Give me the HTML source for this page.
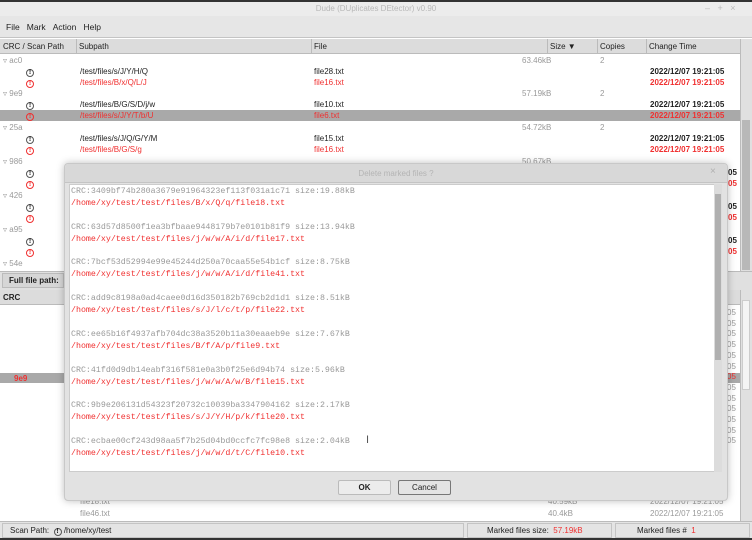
<!DOCTYPE html>
<html><head><meta charset="utf-8"><style>
*{margin:0;padding:0;box-sizing:border-box}
body{width:752px;height:540px;overflow:hidden;background:#fff;font-family:"Liberation Sans","DejaVu Sans",sans-serif;font-size:8px;color:#222;position:relative}
.a{position:absolute;white-space:nowrap}
.r{color:#f03030}
.g{color:#999}
.m{font-family:"Liberation Mono","DejaVu Sans Mono",monospace;font-size:8.3px}
.hd{background:#dcdcdc;border-bottom:1px solid #bbb}
.sep{position:absolute;top:0;width:1px;height:15px;background:#bbb}
.ic{display:inline-block;width:8px;height:8px;border:1px solid #555;border-radius:50%;font-size:7px;line-height:6px;text-align:center;font-weight:bold}
.ic.r{border-color:#f03030}
</style></head><body>
<div class="a" style="left:0;top:0;width:752px;height:2px;background:#333"></div>
<div class="a" style="left:0;top:2px;width:752px;height:14px;background:#ececec;color:#b8b8b8;text-align:center;line-height:14px;font-size:8px">Dude (DUplicates DEtector) v0.90</div>
<div class="a" style="left:705px;top:3px;color:#bbb;font-size:9px">–&nbsp;&nbsp;&nbsp;+&nbsp;&nbsp;&nbsp;×</div>
<div class="a" style="left:0;top:16px;width:752px;height:22px;background:#e6e6e6;border-bottom:1px solid #c4c4c4"></div>
<div class="a" style="left:6px;top:22px;font-size:8.5px">File&nbsp;&nbsp;&nbsp;Mark&nbsp;&nbsp;&nbsp;Action&nbsp;&nbsp;&nbsp;Help</div>
<div class="a hd" style="left:0;top:39px;width:740px;height:15px">
<div class="sep" style="left:76px"></div><div class="sep" style="left:311px"></div><div class="sep" style="left:547px"></div><div class="sep" style="left:597px"></div><div class="sep" style="left:646px"></div>
<span class="a" style="left:3px;top:3px">CRC / Scan Path</span><span class="a" style="left:79px;top:3px">Subpath</span><span class="a" style="left:314px;top:3px">File</span><span class="a" style="left:550px;top:3px">Size ▼</span><span class="a" style="left:600px;top:3px">Copies</span><span class="a" style="left:649px;top:3px">Change Time</span></div>
<div class="a" style="left:740px;top:39px;width:12px;height:232px;background:#e0e0e0;border-left:1px solid #bbb"></div>
<div class="a" style="left:742px;top:120px;width:8px;height:150px;background:#b8b8b8"></div>
<div class="a" style="left:0;top:110px;width:740px;height:11px;background:#a9a9a9"></div>
<div class="a g" style="left:3px;top:56px">▿ ac0</div><div class="a g" style="left:522px;top:56px">63.46kB</div><div class="a g" style="left:600px;top:56px">2</div>
<div class="a" style="left:26px;top:67px"><span class="ic">!</span></div><div class="a" style="left:80px;top:67px">/test/files/s/J/Y/H/Q</div><div class="a" style="left:314px;top:67px">file28.txt</div><div class="a" style="left:650px;top:67px;font-weight:bold">2022/12/07 19:21:05</div>
<div class="a r" style="left:26px;top:78px"><span class="ic r">!</span></div><div class="a r" style="left:80px;top:78px">/test/files/B/x/Q/L/J</div><div class="a r" style="left:314px;top:78px">file16.txt</div><div class="a r" style="left:650px;top:78px;font-weight:bold">2022/12/07 19:21:05</div>
<div class="a g" style="left:3px;top:89px">▿ 9e9</div><div class="a g" style="left:522px;top:89px">57.19kB</div><div class="a g" style="left:600px;top:89px">2</div>
<div class="a" style="left:26px;top:100px"><span class="ic">!</span></div><div class="a" style="left:80px;top:100px">/test/files/B/G/S/D/j/w</div><div class="a" style="left:314px;top:100px">file10.txt</div><div class="a" style="left:650px;top:100px;font-weight:bold">2022/12/07 19:21:05</div>
<div class="a r" style="left:26px;top:111px"><span class="ic r">!</span></div><div class="a r" style="left:80px;top:111px">/test/files/s/J/Y/T/b/U</div><div class="a r" style="left:314px;top:111px">file6.txt</div><div class="a r" style="left:650px;top:111px;font-weight:bold">2022/12/07 19:21:05</div>
<div class="a g" style="left:3px;top:123px">▿ 25a</div><div class="a g" style="left:522px;top:123px">54.72kB</div><div class="a g" style="left:600px;top:123px">2</div>
<div class="a" style="left:26px;top:134px"><span class="ic">!</span></div><div class="a" style="left:80px;top:134px">/test/files/s/J/Q/G/Y/M</div><div class="a" style="left:314px;top:134px">file15.txt</div><div class="a" style="left:650px;top:134px;font-weight:bold">2022/12/07 19:21:05</div>
<div class="a r" style="left:26px;top:145px"><span class="ic r">!</span></div><div class="a r" style="left:80px;top:145px">/test/files/B/G/S/g</div><div class="a r" style="left:314px;top:145px">file16.txt</div><div class="a r" style="left:650px;top:145px;font-weight:bold">2022/12/07 19:21:05</div>
<div class="a g" style="left:3px;top:157px">▿ 986</div><div class="a g" style="left:522px;top:157px">50.67kB</div>
<div class="a" style="left:26px;top:168px"><span class="ic">!</span></div><div class="a r" style="left:26px;top:179px"><span class="ic r">!</span></div>
<div class="a g" style="left:3px;top:191px">▿ 426</div>
<div class="a" style="left:26px;top:202px"><span class="ic">!</span></div><div class="a r" style="left:26px;top:213px"><span class="ic r">!</span></div>
<div class="a g" style="left:3px;top:225px">▿ a95</div>
<div class="a" style="left:26px;top:236px"><span class="ic">!</span></div><div class="a r" style="left:26px;top:247px"><span class="ic r">!</span></div>
<div class="a g" style="left:3px;top:259px">▿ 54e</div>
<div class="a" style="left:728px;top:168px;font-weight:bold">05</div><div class="a r" style="left:728px;top:179px;font-weight:bold">05</div>
<div class="a" style="left:728px;top:202px;font-weight:bold">05</div><div class="a r" style="left:728px;top:213px;font-weight:bold">05</div>
<div class="a" style="left:728px;top:236px;font-weight:bold">05</div><div class="a r" style="left:728px;top:247px;font-weight:bold">05</div>
<div class="a" style="left:0;top:271px;width:752px;height:19px;background:#e0e0e0;border-top:1px solid #bbb"></div>
<div class="a" style="left:2px;top:273px;width:62px;height:15px;background:#d6d6d6;border:1px solid #bbb;font-weight:bold;line-height:13px;padding-left:6px">Full file path:</div>
<div class="a hd" style="left:0;top:290px;width:740px;height:15px"><span class="a" style="left:3px;top:3px;font-weight:bold">CRC</span></div>
<div class="a" style="left:740px;top:290px;width:12px;height:232px;background:#e0e0e0;border-left:1px solid #bbb"></div>
<div class="a" style="left:742px;top:300px;width:8px;height:90px;background:#f4f4f4;border:1px solid #ccc"></div>
<div class="a" style="left:0;top:373px;width:740px;height:10px;background:#a9a9a9"></div>
<div class="a r" style="left:14px;top:374px;font-weight:bold">9e9</div>
<div class="a g" style="left:727px;top:308px;line-height:10.7px">05<br>05<br>05<br>05<br>05<br>05<br><span class="r">05</span><br>05<br>05<br>05<br>05<br>05<br>05</div>
<div class="a g" style="left:80px;top:497px">file18.txt</div><div class="a g" style="left:548px;top:497px">40.59kB</div><div class="a g" style="left:650px;top:497px">2022/12/07 19:21:05</div>
<div class="a g" style="left:80px;top:509px">file46.txt</div><div class="a g" style="left:548px;top:509px">40.4kB</div><div class="a g" style="left:650px;top:509px">2022/12/07 19:21:05</div>
<div class="a" style="left:0;top:521px;width:752px;height:19px;background:#e4e4e4;border-top:1px solid #bbb"></div>
<div class="a" style="left:2px;top:523px;width:462px;height:15px;border:1px solid #c4c4c4"></div>
<div class="a" style="left:10px;top:526px">Scan Path:&nbsp;&nbsp;<span class="ic">!</span>&nbsp;/home/xy/test</div>
<div class="a" style="left:467px;top:523px;width:145px;height:15px;border:1px solid #c4c4c4"></div>
<div class="a" style="left:487px;top:526px">Marked files size:&nbsp;&nbsp;<span class="r">57.19kB</span></div>
<div class="a" style="left:615px;top:523px;width:135px;height:15px;border:1px solid #c4c4c4"></div>
<div class="a" style="left:637px;top:526px">Marked files #&nbsp;&nbsp;<span class="r">1</span></div>
<div class="a" style="left:0;top:538px;width:752px;height:2px;background:#333"></div>
<div class="a" style="left:64px;top:163px;width:664px;height:338px;background:#e2e2e2;border:1px solid #c8c8c8;border-radius:4px;box-shadow:0 0 8px rgba(0,0,0,0.25)"></div>
<div class="a" style="left:65px;top:164px;width:662px;height:19px;background:#d8d8d8;border-bottom:1px solid #c4c4c4;text-align:center;color:#b4b4b4;line-height:19px;font-size:8px;border-radius:4px 4px 0 0">Delete marked files ?</div>
<div class="a" style="left:710px;top:166px;color:#b0b0b0;font-size:10px">×</div>
<div class="a" style="left:69px;top:184px;width:646px;height:288px;background:#fff;border:1px solid #ccc"></div>
<div class="a" style="left:714px;top:184px;width:8px;height:288px;background:#dcdcdc"></div>
<div class="a" style="left:715px;top:194px;width:6px;height:166px;background:#b0b0b0"></div>
<div class="a m" style="left:71px;top:186px;line-height:11.9px">
<span class="g">CRC:3409bf74b280a3679e91964323ef113f031a1c71 size:19.88kB</span><br><span class="r">/home/xy/test/test/files/B/x/Q/q/file18.txt</span><br><br>
<span class="g">CRC:63d57d8500f1ea3bfbaae9448179b7e0101b81f9 size:13.94kB</span><br><span class="r">/home/xy/test/test/files/j/w/w/A/i/d/file17.txt</span><br><br>
<span class="g">CRC:7bcf53d52994e99e45244d250a70caa55e54b1cf size:8.75kB</span><br><span class="r">/home/xy/test/test/files/j/w/w/A/i/d/file41.txt</span><br><br>
<span class="g">CRC:add9c8198a0ad4caee0d16d350182b769cb2d1d1 size:8.51kB</span><br><span class="r">/home/xy/test/test/files/s/J/l/c/t/p/file22.txt</span><br><br>
<span class="g">CRC:ee65b16f4937afb704dc38a3520b11a30eaaeb9e size:7.67kB</span><br><span class="r">/home/xy/test/test/files/B/f/A/p/file9.txt</span><br><br>
<span class="g">CRC:41fd0d9db14eabf316f581e0a3b0f25e6d94b74 size:5.96kB</span><br><span class="r">/home/xy/test/test/files/j/w/w/A/w/B/file15.txt</span><br><br>
<span class="g">CRC:9b9e206131d54323f20732c10039ba3347904162 size:2.17kB</span><br><span class="r">/home/xy/test/test/files/s/J/Y/H/p/k/file20.txt</span><br><br>
<span class="g">CRC:ecbae00cf243d98aa5f7b25d04bd0ccfc7fc98e8 size:2.04kB</span><br><span class="r">/home/xy/test/test/files/j/w/w/d/t/C/file10.txt</span>
</div>
<div class="a" style="left:366px;top:434px;color:#555;font-size:11px">I</div>
<div class="a" style="left:338px;top:480px;width:53px;height:15px;background:#ececec;border:1px solid #bbb;border-radius:2px;text-align:center;line-height:13px;font-weight:bold">OK</div>
<div class="a" style="left:398px;top:480px;width:53px;height:15px;background:#e4e4e4;border:1px solid #777;border-radius:2px;text-align:center;line-height:13px">Cancel</div>
</body></html>
